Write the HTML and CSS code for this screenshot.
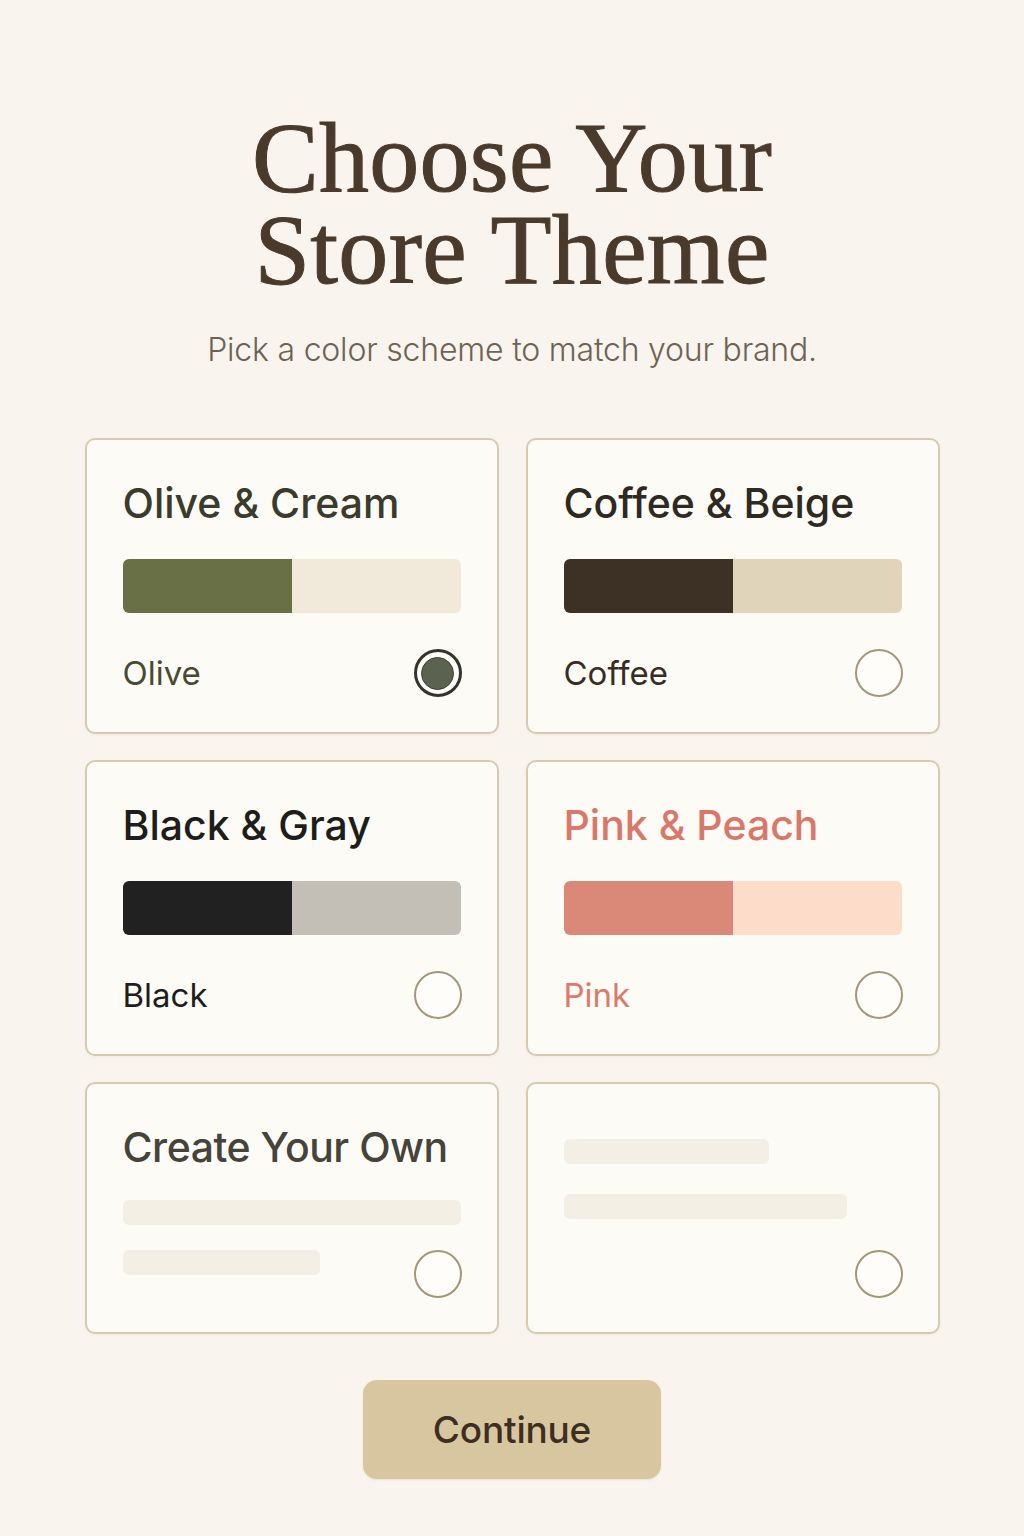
FILE: index.html
```html
<!DOCTYPE html>
<html lang="en">
<head>
<meta charset="utf-8">
<title>Choose Your Store Theme</title>
<link rel="stylesheet" href="styles.css">
</head>
<body>
<main class="page">
  <header class="intro">
    <h1 class="heading"><span class="heading-line">Choose Your</span><span class="heading-line">Store Theme</span></h1>
    <p class="subtitle">Pick a color scheme to match your brand.</p>
  </header>

  <section class="themes">
    <div class="card">
      <h2 class="card-title t-olive">Olive &amp; Cream</h2>
      <div class="swatch"><span class="sw sw-olive"></span><span class="sw sw-cream"></span></div>
      <div class="card-foot">
        <span class="label l-olive">Olive</span>
        <span class="radio radio-on"><span class="dot"></span></span>
      </div>
    </div>

    <div class="card">
      <h2 class="card-title t-coffee">Coffee &amp; Beige</h2>
      <div class="swatch"><span class="sw sw-coffee"></span><span class="sw sw-beige"></span></div>
      <div class="card-foot">
        <span class="label l-coffee">Coffee</span>
        <span class="radio"></span>
      </div>
    </div>

    <div class="card">
      <h2 class="card-title t-black">Black &amp; Gray</h2>
      <div class="swatch"><span class="sw sw-black"></span><span class="sw sw-gray"></span></div>
      <div class="card-foot">
        <span class="label l-black">Black</span>
        <span class="radio"></span>
      </div>
    </div>

    <div class="card">
      <h2 class="card-title t-pink">Pink &amp; Peach</h2>
      <div class="swatch"><span class="sw sw-pink"></span><span class="sw sw-peach"></span></div>
      <div class="card-foot">
        <span class="label l-pink">Pink</span>
        <span class="radio"></span>
      </div>
    </div>

    <div class="card card-short">
      <h2 class="card-title t-own">Create Your Own</h2>
      <div class="skel skel-full skel-first"></div>
      <div class="card-foot card-foot-top">
        <span class="skel skel-half"></span>
        <span class="radio"></span>
      </div>
    </div>

    <div class="card card-short card-blank">
      <div class="skel skel-mid"></div>
      <div class="skel skel-wide"></div>
      <div class="card-foot card-foot-end">
        <span class="radio"></span>
      </div>
    </div>
  </section>

  <div class="actions">
    <button class="continue" type="button">Continue</button>
  </div>
</main>
</body>
</html>
```

FILE: styles.css
```css
* { box-sizing: border-box; }

html, body {
  margin: 0;
  padding: 0;
}

body {
  background: #f9f4ed;
  font-family: Inter, "Noto Sans", "Liberation Sans", sans-serif;
  width: 1024px;
  min-height: 1536px;
}

.page {
  display: flex;
  flex-direction: column;
  align-items: center;
  padding-top: 112px;
}

.intro {
  display: flex;
  flex-direction: column;
  align-items: center;
}

.heading {
  margin: 0;
  display: flex;
  flex-direction: column;
  align-items: center;
  font-family: "Liberation Serif", "Times New Roman", serif;
  font-weight: 400;
  font-size: 100px;
  letter-spacing: 0.3px;
  color: #4a3a2c;
  -webkit-text-stroke: 1px #4a3a2c;
  text-align: center;
}

.heading-line {
  display: block;
  height: 92px;
  line-height: 92px;
}

.subtitle {
  margin: 34px 0 0;
  font-size: 32px;
  line-height: 40px;
  font-weight: 300;
  color: #6d6355;
  letter-spacing: -0.2px;
}

.themes {
  margin-top: 68px;
  display: grid;
  grid-template-columns: 414px 414px;
  column-gap: 27px;
  row-gap: 26px;
}

.card {
  background: #fdfbf6;
  border: 2px solid #d6cbb2;
  border-radius: 10px;
  padding: 39px 36px 35px;
  display: flex;
  flex-direction: column;
  box-shadow: 0 1px 3px rgba(160, 140, 100, 0.08);
}

.card-short {
  padding-bottom: 34px;
}

.card-blank {
  padding-top: 55px;
}

.card-title {
  margin: 0;
  font-size: 41px;
  line-height: 48px;
  font-weight: 500;
  letter-spacing: 0;
}

.t-olive { color: #3a3b2c; }
.t-coffee { color: #2e2922; }
.t-black { color: #1d1d1b; }
.t-pink { color: #d9786a; }
.t-own { color: #45433a; letter-spacing: -0.5px; }

.swatch {
  margin-top: 32px;
  height: 54px;
  display: flex;
  border-radius: 6px;
  overflow: hidden;
}

.sw { flex: 1 1 0; }
.sw-olive { background: #6a7045; }
.sw-cream { background: #f1e9d9; }
.sw-coffee { background: #3d3125; }
.sw-beige { background: #e0d4ba; }
.sw-black { background: #212121; }
.sw-gray { background: #c3bfb6; }
.sw-pink { background: #da8878; }
.sw-peach { background: #fdddca; }

.card-foot {
  margin-top: 36px;
  display: flex;
  align-items: center;
  justify-content: space-between;
  height: 48px;
}

.card-foot-top {
  margin-top: 25px;
  align-items: flex-start;
}

.card-foot-end {
  margin-top: 31px;
  justify-content: flex-end;
}

.skel-first { margin-top: 29px; }

.label {
  font-size: 33px;
  line-height: 40px;
  font-weight: 400;
  letter-spacing: 0;
}

.l-olive { color: #484a32; }
.l-coffee { color: #382d24; }
.l-black { color: #1e1e1e; }
.l-pink { color: #dc7a69; }

.radio {
  width: 48px;
  height: 48px;
  margin-right: -1px;
  border-radius: 50%;
  border: 2px solid #a39779;
  background: #fffdf9;
  display: flex;
  align-items: center;
  justify-content: center;
  flex: none;
}

.radio-on {
  border: 3px solid #33352a;
}

.dot {
  width: 33px;
  height: 33px;
  border-radius: 50%;
  background: #5b6250;
  border: 1px solid #3c3f33;
}

.skel {
  display: block;
  height: 25px;
  border-radius: 6px;
  background: #f3efe5;
}

.skel-full { width: 100%; }
.skel-half { width: 197px; }
.skel-mid { width: 205px; }
.skel-wide { width: 283px; margin-top: 30px; }

.actions {
  margin-top: 46px;
  display: flex;
  justify-content: center;
}

.continue {
  width: 298px;
  height: 99px;
  border: none;
  border-radius: 14px;
  background: #d8c6a0;
  color: #3d2f20;
  font-family: Inter, "Noto Sans", "Liberation Sans", sans-serif;
  font-size: 37px;
  font-weight: 500;
  letter-spacing: -0.2px;
  box-shadow: 0 1px 2px rgba(150, 120, 70, 0.15);
}
```
